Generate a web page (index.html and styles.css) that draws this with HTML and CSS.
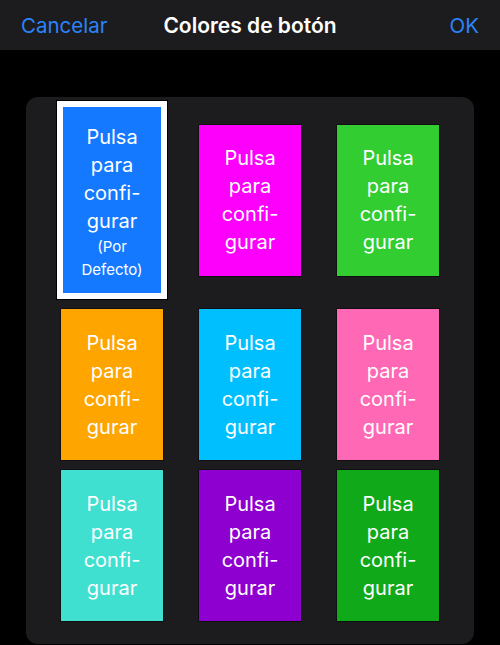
FILE: index.html
```html
<!DOCTYPE html>
<html lang="es">
<head>
    <meta charset="UTF-8">
    <meta name="viewport" content="width=device-width, initial-scale=1.0">
    <title>Colores de botón</title>
    <link rel="stylesheet" href="styles.css">
</head>
<body>
    <header class="topbar">
        <a class="bar-btn" href="#">Cancelar</a>
        <h1 class="bar-title">Colores de botón</h1>
        <a class="bar-btn bar-right" href="#">OK</a>
    </header>

    <section class="panel">
        <div class="swatch selected c-blue">
            <span class="label">Pulsa<br>para<br>confi-<br>gurar</span>
            <span class="note">(Por<br>Defecto)</span>
        </div>
        <div class="swatch c-magenta"><span class="label">Pulsa<br>para<br>confi-<br>gurar</span></div>
        <div class="swatch c-lime"><span class="label">Pulsa<br>para<br>confi-<br>gurar</span></div>

        <div class="swatch c-orange"><span class="label">Pulsa<br>para<br>confi-<br>gurar</span></div>
        <div class="swatch c-sky"><span class="label">Pulsa<br>para<br>confi-<br>gurar</span></div>
        <div class="swatch c-pink"><span class="label">Pulsa<br>para<br>confi-<br>gurar</span></div>

        <div class="swatch c-teal"><span class="label">Pulsa<br>para<br>confi-<br>gurar</span></div>
        <div class="swatch c-violet"><span class="label">Pulsa<br>para<br>confi-<br>gurar</span></div>
        <div class="swatch c-green"><span class="label">Pulsa<br>para<br>confi-<br>gurar</span></div>
    </section>
</body>
</html>
```

FILE: styles.css
```css
* {
    margin: 0;
    padding: 0;
    box-sizing: border-box;
    font-family: Inter, "Noto Sans", sans-serif;
}

body {
    background-color: #000;
    color: #fff;
}

.topbar {
    height: 50px;
    background-color: #1c1c1e;
    display: grid;
    grid-template-columns: 1fr auto 1fr;
    align-items: center;
    padding: 0 21px;
}

.bar-btn {
    color: #2a84f8;
    text-decoration: none;
    font-size: 20.5px;
}

.bar-right {
    justify-self: end;
}

.bar-title {
    font-size: 21px;
    font-weight: 600;
    color: #fff;
}

.panel {
    width: 448px;
    margin: 47px 0 0 26px;
    background-color: #1c1c1e;
    border-radius: 12px;
    padding: 4px 0 23px;
    display: grid;
    grid-template-columns: repeat(3, 102px);
    justify-content: center;
    align-items: center;
    column-gap: 36px;
    row-gap: 10px;
}

.swatch {
    height: 151px;
    display: flex;
    flex-direction: column;
    align-items: center;
    justify-content: center;
    text-align: center;
    box-shadow: 0 0 0 1px rgba(0,0,0,0.4);
}

.label {
    font-size: 20px;
    line-height: 28px;
}

.note {
    font-size: 15px;
    line-height: 23px;
    margin-bottom: -3px;
}

.swatch.selected {
    width: 110px;
    height: 198px;
    margin: 0 -4px;
    border: 6px solid #fff;
    box-shadow: 0 0 0 1px #000;
}

.c-blue { background-color: #1479ff; }
.c-magenta { background-color: #fc00fc; }
.c-lime { background-color: #31cd31; }
.c-orange { background-color: #ffa500; }
.c-sky { background-color: #00bfff; }
.c-pink { background-color: #ff68b4; }
.c-teal { background-color: #40e0d0; }
.c-violet { background-color: #8d00cf; }
.c-green { background-color: #10a919; }
```
